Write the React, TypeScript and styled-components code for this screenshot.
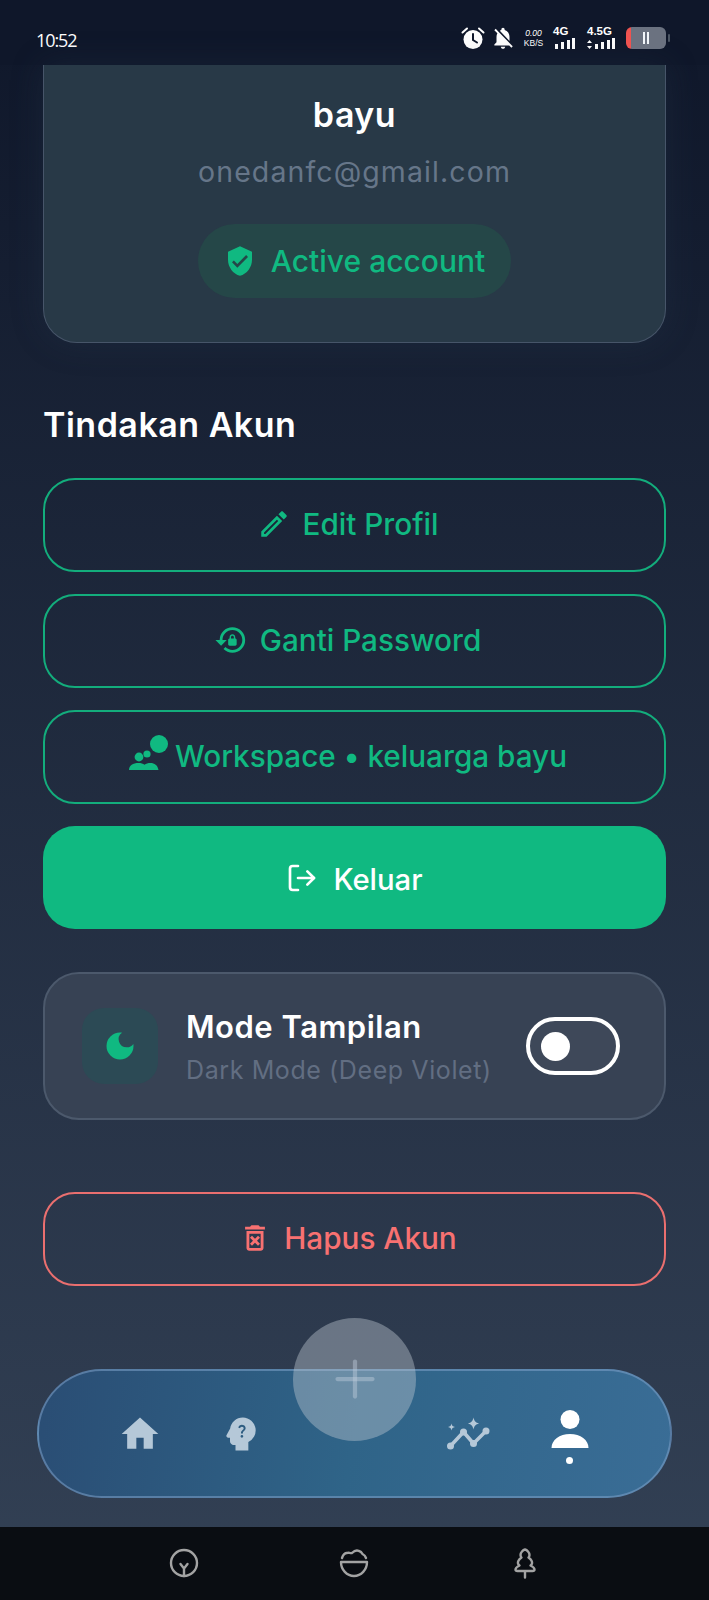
import React from "react";
import styled, { createGlobalStyle } from "styled-components";
import {
  MdNotificationsOff,
  MdVerifiedUser,
  MdOutlineEdit,
  MdLockReset,
  MdDarkMode,
  MdOutlineDeleteForever,
  MdHome,
  MdPsychologyAlt,
} from "react-icons/md";
import { LuLogOut, LuPlus } from "react-icons/lu";

const Global = createGlobalStyle`
  html, body { margin: 0; padding: 0; background: #0f172a; }
  * { box-sizing: border-box; }
  body { font-family: Inter, "Liberation Sans", sans-serif; }
`;

const Screen = styled.div`
  position: relative;
  width: 709px;
  height: 1600px;
  overflow: hidden;
  display: flex;
  flex-direction: column;
  background: linear-gradient(180deg, #0f172a 0%, #334155 100%);
`;

const StatusBar = styled.div`
  height: 65px;
  flex: none;
  display: flex;
  align-items: center;
  justify-content: space-between;
  padding: 14px 43px 0 36px;
  background: #0f172a;
  color: #fff;
`;

const Clock = styled.span`
  font-family: "Open Sans", sans-serif;
  font-size: 18px;
  letter-spacing: -1.1px;
  font-weight: 400;
`;

const StatusIcons = styled.div`
  display: flex;
  align-items: center;
  margin-bottom: 4px;
`;

const Bell = styled.span`
  display: flex;
  margin-left: 5px;
`;

const Speed = styled.div`
  display: flex;
  flex-direction: column;
  align-items: center;
  font-size: 8.500px;
  line-height: 10px;
  font-family: "Liberation Sans", sans-serif;
  margin-left: 8px;
  width: 19px;
`;

const SpeedValue = styled.span`
  font-style: italic;
`;

const SignalBox = styled.div<{ $gap: number }>`
  display: flex;
  flex-direction: column;
  align-items: flex-start;
  margin-left: ${(p) => p.$gap}px;
  font-size: 11.500px;
  line-height: 11px;
  font-weight: 700;
  font-family: "Liberation Sans", sans-serif;
  svg {
    display: block;
    margin-top: 1px;
  }
`;

const Battery = styled.div`
  width: 40px;
  height: 22px;
  margin-left: 11px;
  border-radius: 6px;
  background: linear-gradient(90deg, #ef5350 0 5px, #6b7280 5px);
  display: flex;
  align-items: center;
  justify-content: center;
  gap: 2px;
  position: relative;
  &::after {
    content: "";
    position: absolute;
    right: -4px;
    top: 7px;
    width: 2px;
    height: 8px;
    border-radius: 1px;
    background: #4b5563;
  }
`;

const BatteryBar = styled.span`
  width: 2px;
  height: 12px;
  background: #f1f5f9;
`;

const Content = styled.main`
  flex: 1;
  display: flex;
  flex-direction: column;
  padding: 0 43px;
`;

const ProfileCard = styled.section`
  height: 278px;
  flex: none;
  display: flex;
  flex-direction: column;
  align-items: center;
  padding-top: 30px;
  border: 1.500px solid #475569;
  border-top: none;
  border-radius: 0 0 34px 34px;
  background: #283947;
  box-shadow: 0 0 32px rgba(40, 60, 80, 0.3);
`;

const Name = styled.h1`
  margin: 0;
  font-size: 34px;
  line-height: 40px;
  font-weight: 600;
  color: #fff;
  letter-spacing: 0.5px;
`;

const Email = styled.div`
  margin-top: 19px;
  font-size: 28.500px;
  line-height: 36px;
  font-weight: 400;
  color: #667689;
  letter-spacing: 1.1px;
`;

const ActiveBadge = styled.div`
  margin-top: 34px;
  height: 74px;
  width: 313px;
  border-radius: 37px;
  background: #254748;
  display: flex;
  align-items: center;
  justify-content: center;
  gap: 15px;
  color: #10b981;
  font-size: 30px;
  font-weight: 500;
  svg {
    width: 32px;
    height: 32px;
    flex: none;
  }
`;

const SectionTitle = styled.h2`
  margin: 62px 0 33px;
  font-size: 34px;
  line-height: 40px;
  font-weight: 600;
  color: #fff;
  letter-spacing: 0.5px;
`;

const Actions = styled.div`
  display: flex;
  flex-direction: column;
  gap: 22px;
`;

const OutlineButton = styled.button<{ $danger?: boolean }>`
  height: 94px;
  width: 100%;
  border: 2px solid ${(p) => (p.$danger ? "#ea6f6f" : "#13ad7c")};
  border-radius: 32px;
  background: transparent;
  color: ${(p) => (p.$danger ? "#f87171" : "#10b981")};
  display: flex;
  align-items: center;
  justify-content: center;
  gap: 12px;
  font: 500 29.700px Inter, sans-serif;
  padding: 0 14px 2px 0;
  svg {
    width: 34px;
    height: 34px;
    flex: none;
  }
`;

const WorkspaceIcon = styled.svg`
  && {
    width: 44px;
    height: 40px;
    margin: -4px -9px 0 0;
  }
`;

const PrimaryButton = styled.button`
  height: 103px;
  width: 100%;
  border: none;
  border-radius: 32px;
  background: #10b981;
  color: #fff;
  display: flex;
  align-items: center;
  justify-content: center;
  gap: 15px;
  font: 500 29.300px Inter, sans-serif;
  padding: 3px 0 0;
  svg {
    width: 32px;
    height: 32px;
    margin-top: -3px;
  }
`;

const ModeCard = styled.section`
  margin-top: 43px;
  height: 148px;
  flex: none;
  display: flex;
  align-items: center;
  padding: 0 44px 0 37px;
  border: 2px solid #4c596c;
  border-radius: 36px;
  background: #374254;
`;

const ModeIcon = styled.div`
  width: 76px;
  height: 76px;
  flex: none;
  border-radius: 22px;
  background: #2c4a55;
  color: #10b981;
  display: flex;
  align-items: center;
  justify-content: center;
  svg {
    width: 36px;
    height: 36px;
  }
`;

const ModeText = styled.div`
  flex: 1;
  margin-left: 28px;
  display: flex;
  flex-direction: column;
  gap: 9px;
`;

const ModeTitle = styled.div`
  font-size: 31px;
  line-height: 38px;
  font-weight: 600;
  color: #fff;
  letter-spacing: 0.5px;
`;

const ModeSub = styled.div`
  font-size: 25px;
  line-height: 30px;
  color: #626e82;
  letter-spacing: 0.6px;
`;

const Toggle = styled.div`
  width: 94px;
  height: 58px;
  flex: none;
  border: 4px solid #fff;
  border-radius: 29px;
  background: #3e4859;
  display: flex;
  align-items: center;
  padding-left: 11px;
`;

const Knob = styled.span`
  width: 29px;
  height: 29px;
  border-radius: 50%;
  background: #fff;
`;

const DeleteWrap = styled.div`
  margin-top: 72px;
`;

const BottomNav = styled.nav`
  position: absolute;
  left: 37px;
  top: 1369px;
  width: 635px;
  height: 129px;
  border: 2px solid rgba(125, 160, 200, 0.55);
  border-radius: 65px;
  background: linear-gradient(100deg, #2a4d74 0%, #2f6488 50%, #3a6d96 100%);
  display: grid;
  grid-template-columns: 101px 101px 1fr 101px 101px;
  align-items: center;
  padding: 0 50px;
`;

const NavItem = styled.div<{ $active?: boolean }>`
  display: flex;
  flex-direction: column;
  align-items: center;
  justify-content: center;
  gap: ${(p) => (p.$active ? "5px" : "0")};
  margin-top: ${(p) => (p.$active ? "4px" : "0")};
  color: ${(p) => (p.$active ? "#fff" : "#b5c8d8")};
  svg {
    width: 44px;
    height: 44px;
  }
`;

const ActiveDot = styled.span`
  width: 7px;
  height: 7px;
  border-radius: 50%;
  background: #fff;
`;

const Fab = styled.div`
  position: absolute;
  left: 293px;
  top: 1318px;
  width: 123px;
  height: 123px;
  border-radius: 50%;
  background: rgba(190, 200, 210, 0.42);
  color: rgba(190, 205, 220, 0.45);
  display: flex;
  align-items: flex-start;
  justify-content: center;
  padding-top: 31px;
  svg {
    width: 60px;
    height: 60px;
    stroke-width: 1.700;
  }
`;

const SystemNav = styled.footer`
  height: 73px;
  flex: none;
  background: #0a0d12;
  display: grid;
  grid-template-columns: repeat(3, 1fr);
  align-items: center;
  justify-items: center;
  padding: 0 99px 2px;
  color: #a3a3a3;
  svg {
    width: 32px;
    height: 32px;
    fill: none;
    stroke: currentColor;
    stroke-width: 2.400;
    stroke-linecap: round;
    stroke-linejoin: round;
  }
`;

const Bars = ({ width }: { width: number }) => (
  <svg width={width} height="11" viewBox={`0 0 ${width} 11`} fill="#fff">
    <rect x={width - 20} y="6" width="3" height="5" />
    <rect x={width - 14} y="4" width="3" height="7" />
    <rect x={width - 8} y="2" width="3" height="9" />
    <rect x={width - 3} y="0" width="3" height="11" />
    {width > 24 && <path d="M2.500 2l2.500 3h-5zM2.500 11l-2.500-3h5z" />}
  </svg>
);

const AlarmFilled = () => (
  <svg width="24" height="24" viewBox="0 0 24 24">
    <circle cx="12" cy="13.500" r="9.500" fill="#fff" />
    <path d="M1.500 6.500 6 2.500M22.500 6.500 18 2.500" stroke="#fff" strokeWidth="2" strokeLinecap="round" />
    <path d="M12 8v6l4 2.500" fill="none" stroke="#0f172a" strokeWidth="2" strokeLinecap="round" />
  </svg>
);

const AutoGraphNodes = () => (
  <svg viewBox="0 0 44 44" fill="currentColor">
    <path d="M3.500 34 16.500 20 26.500 31.500 39 19" fill="none" stroke="currentColor" strokeWidth="3.500" strokeLinejoin="round" />
    <circle cx="3.500" cy="34" r="3.500" />
    <circle cx="16.500" cy="20" r="3.500" />
    <circle cx="26.500" cy="31.500" r="3.500" />
    <circle cx="39" cy="19" r="3.500" />
    <path d="M26.500 5.500c.8 3.500 2 5 5.500 6-3.500 1-4.700 2.500-5.500 6-.8-3.500-2-5-5.500-6 3.500-1 4.700-2.500 5.500-6z" />
    <path d="M4.500 11.500c.5 2.200 1.300 3 3.500 3.500-2.200.5-3 1.300-3.500 3.500-.5-2.200-1.300-3-3.500-3.500 2.200-.5 3-1.300 3.500-3.500z" />
  </svg>
);

export default function App() {
  return (
    <Screen>
      <Global />
      <StatusBar>
        <Clock>10:52</Clock>
        <StatusIcons>
          <AlarmFilled />
          <Bell>
            <MdNotificationsOff size={26} />
          </Bell>
          <Speed>
            <SpeedValue>0.00</SpeedValue>
            <span>KB/S</span>
          </Speed>
          <SignalBox $gap={10}>
            <span>4G</span>
            <Bars width={22} />
          </SignalBox>
          <SignalBox $gap={12}>
            <span>4.5G</span>
            <Bars width={28} />
          </SignalBox>
          <Battery>
            <BatteryBar />
            <BatteryBar />
          </Battery>
        </StatusIcons>
      </StatusBar>

      <Content>
        <ProfileCard>
          <Name>bayu</Name>
          <Email>onedanfc@gmail.com</Email>
          <ActiveBadge>
            <MdVerifiedUser />
            Active account
          </ActiveBadge>
        </ProfileCard>

        <SectionTitle>Tindakan Akun</SectionTitle>

        <Actions>
          <OutlineButton>
            <MdOutlineEdit />
            Edit Profil
          </OutlineButton>
          <OutlineButton>
            <MdLockReset />
            Ganti Password
          </OutlineButton>
          <OutlineButton>
            <WorkspaceIcon viewBox="0 0 44 40" fill="currentColor">
              <circle cx="31" cy="10" r="9" />
              <circle cx="19" cy="20" r="3.600" />
              <circle cx="11" cy="23" r="4.400" />
              <path d="M1 36c0-4.500 4-7 9.500-7 2.500 0 4.500.6 6 1.800 1.500-1.200 3.500-1.800 6-1.800 4 0 7 2 8 7H1z" />
            </WorkspaceIcon>
            Workspace • keluarga bayu
          </OutlineButton>
          <PrimaryButton>
            <LuLogOut />
            Keluar
          </PrimaryButton>
        </Actions>

        <ModeCard>
          <ModeIcon>
            <MdDarkMode />
          </ModeIcon>
          <ModeText>
            <ModeTitle>Mode Tampilan</ModeTitle>
            <ModeSub>Dark Mode (Deep Violet)</ModeSub>
          </ModeText>
          <Toggle>
            <Knob />
          </Toggle>
        </ModeCard>

        <DeleteWrap>
          <OutlineButton $danger>
            <MdOutlineDeleteForever />
            Hapus Akun
          </OutlineButton>
        </DeleteWrap>
      </Content>

      <BottomNav>
        <NavItem>
          <MdHome />
        </NavItem>
        <NavItem>
          <MdPsychologyAlt />
        </NavItem>
        <span />
        <NavItem>
          <AutoGraphNodes />
        </NavItem>
        <NavItem $active>
          <svg viewBox="0 0 44 44" fill="currentColor">
            <circle cx="22" cy="11.500" r="9.500" />
            <path d="M3.500 40c0-8 8-14 18.500-14s18.500 6 18.500 14H3.500z" />
          </svg>
          <ActiveDot />
        </NavItem>
      </BottomNav>
      <Fab>
        <LuPlus />
      </Fab>

      <SystemNav>
        <svg viewBox="0 0 32 32">
          <circle cx="16" cy="16" r="13" />
          <path d="M16 29v-8M12.500 17l3.500 4.500 3.500-4.500" />
        </svg>
        <svg viewBox="0 0 32 32">
          <path d="M3 15h26a13 14 0 0 1-26 0z" />
          <path d="M4 11c1-3 3-5 5-5 1.500-1 3 .5 5 0 2.500-2.500 5-3 7-2 2 .5 3 2 3.500 3 2 1 3 2.500 3.500 4" />
        </svg>
        <svg viewBox="0 0 32 32">
          <path d="M16 2.500c-2 .5-4.500 3-4.500 5.500 0 1 .5 2 1 2.500-2 1.500-4 4-3.500 6 .2 1 1 1.500 1.500 2-2 1-4 2-4 4 0 1 .8 1.500 2 1.500h15c1.200 0 2-.5 2-1.500 0-2-2-3-4-4 .5-.5 1.300-1 1.500-2 .5-2-1.500-4.500-3.500-6 .5-.5 1-1.500 1-2.500 0-2.500-2.500-5-4.500-5.500zM16 24v6.500" />
        </svg>
      </SystemNav>
    </Screen>
  );
}
